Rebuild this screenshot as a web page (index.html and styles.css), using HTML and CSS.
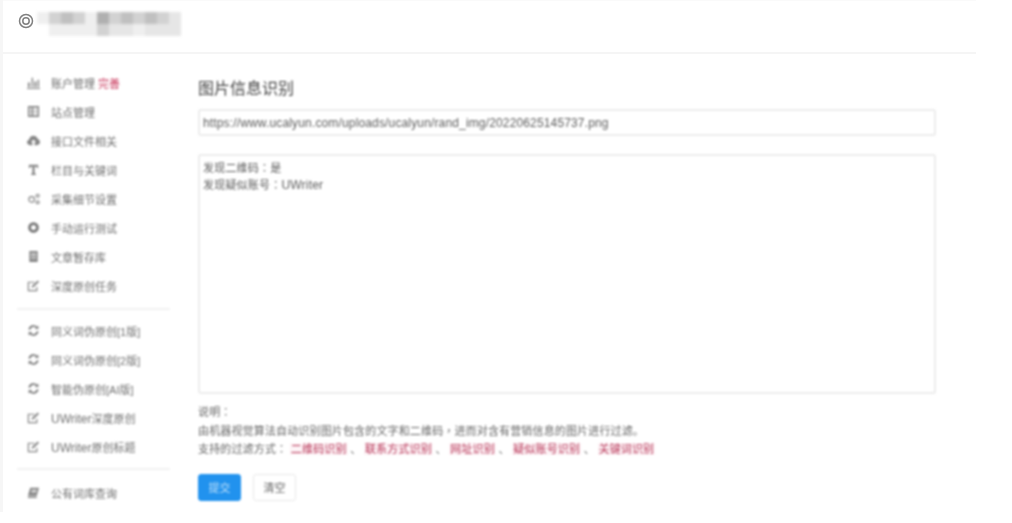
FILE: index.html
```html
<!DOCTYPE html>
<html lang="zh-CN">
<head>
<meta charset="utf-8">
<title>图片信息识别</title>
<link rel="stylesheet" href="styles.css">
</head>
<body>
<div class="shell">
  <header class="topbar">
    <svg class="logo" viewBox="0 0 16 16"><circle cx="8" cy="8" r="6.500"/><circle cx="8" cy="8" r="3.200"/></svg>
    <div class="mosaic" aria-hidden="true">
      <i class="m5"></i><i class="m3"></i><i class="m2"></i><i class="m3"></i><i class="m5"></i><i class="m1"></i><i class="m3"></i><i class="m2"></i><i class="m3"></i><i class="m2"></i><i class="m3"></i><i class="m4"></i>
      <i class="m0"></i><i class="m5"></i><i class="m5"></i><i class="m5"></i><i class="m5"></i><i class="m3"></i><i class="m4"></i><i class="m4"></i><i class="m5"></i><i class="m4"></i><i class="m4"></i><i class="m4"></i>
    </div>
  </header>
  <div class="body">
    <nav class="side">
      <ul class="menu">
        <li><svg viewBox="0 0 14 14"><path class="fill" d="M0 13h14v1H0zM1 7h2v5H1zM5 2h1.500v10H5zM8 6h2v6H8zM11.500 4H13v8h-1.500z"/></svg><span>账户管理 <b class="warn">完善</b></span></li>
        <li><svg viewBox="0 0 14 14"><path class="fill" d="M1 1h12v12H1zM2.500 3v2h2.500V3zM6.500 3v2h5V3zM2.500 6v2h2.500V6zM6.500 6v2h5V6zM2.500 9v2h2.500V9zM6.500 9v2h5V9z" fill-rule="evenodd"/></svg><span>站点管理</span></li>
        <li><svg viewBox="0 0 14 14"><path class="fill" d="M3.500 12C1.500 12 0 10.700 0 9c0-1.500 1-2.600 2.300-2.900C2.600 3.700 4.600 2 7 2c2.200 0 4 1.400 4.600 3.400C13 5.800 14 7.200 14 8.700 14 10.500 12.500 12 10.500 12H8.200V8.800h1.700L7 5.800l-2.900 3h1.700V12z"/></svg><span>接口文件相关</span></li>
        <li><svg viewBox="0 0 14 14"><path class="fill" d="M2 2h10v3.500h-1.200L10.300 4H8.200v7l1.300.5V13h-5v-1.500l1.300-.5V4H3.700l-.5 1.500H2z"/></svg><span>栏目与关键词</span></li>
        <li><svg viewBox="0 0 14 14"><circle class="line" cx="5" cy="8" r="3"/><circle class="line" cx="11.500" cy="4" r="1.600"/><circle class="line" cx="11.500" cy="11" r="1.600"/></svg><span>采集细节设置</span></li>
        <li><svg viewBox="0 0 14 14"><circle class="thick" cx="7" cy="7" r="4.200"/></svg><span>手动运行测试</span></li>
        <li><svg viewBox="0 0 14 14"><path class="fill" d="M2.500 1h9v12h-9zM4 3.500v1h6v-1zM4 6v1h6V6zM4 8.500v1h6v-1z" fill-rule="evenodd"/></svg><span>文章暂存库</span></li>
        <li><svg viewBox="0 0 14 14"><path class="line" d="M10.500 8.500V12.500H1.500V3.500H8"/><path class="fill" d="M5.500 7.300 11.500 1.500 13 3 7 8.800 5 9.300z"/></svg><span>深度原创任务</span></li>
      </ul>
      <ul class="menu ruled">
        <li><svg viewBox="0 0 14 14"><path class="thick2" d="M2.500 6A4.700 4.700 0 0 1 10.800 4M11.500 8A4.700 4.700 0 0 1 3.200 10"/><path class="fill" d="M12.300 1.500V5.500H8.300zM1.700 12.500V8.500H5.700z"/></svg><span>同义词伪原创[1版]</span></li>
        <li><svg viewBox="0 0 14 14"><path class="thick2" d="M2.500 6A4.700 4.700 0 0 1 10.800 4M11.500 8A4.700 4.700 0 0 1 3.200 10"/><path class="fill" d="M12.300 1.500V5.500H8.300zM1.700 12.500V8.500H5.700z"/></svg><span>同义词伪原创[2版]</span></li>
        <li><svg viewBox="0 0 14 14"><path class="thick2" d="M2.500 6A4.700 4.700 0 0 1 10.800 4M11.500 8A4.700 4.700 0 0 1 3.200 10"/><path class="fill" d="M12.300 1.500V5.500H8.300zM1.700 12.500V8.500H5.700z"/></svg><span>智能伪原创[AI版]</span></li>
        <li><svg viewBox="0 0 14 14"><path class="line" d="M10.500 8.500V12.500H1.500V3.500H8"/><path class="fill" d="M5.500 7.300 11.500 1.500 13 3 7 8.800 5 9.300z"/></svg><span><span class="latin">UWriter</span>深度原创</span></li>
        <li><svg viewBox="0 0 14 14"><path class="line" d="M10.500 8.500V12.500H1.500V3.500H8"/><path class="fill" d="M5.500 7.300 11.500 1.500 13 3 7 8.800 5 9.300z"/></svg><span><span class="latin">UWriter</span>原创标题</span></li>
      </ul>
      <ul class="menu ruled last">
        <li><svg viewBox="0 0 14 14"><path class="fill" d="M3.500 2H13L10.500 10.500H1zM5 4v1h5.500V4zM4.500 6v1H10V6zM1 11.300h9.500V13H1z" fill-rule="evenodd"/></svg><span>公有词库查询</span></li>
      </ul>
    </nav>
    <main class="main">
      <h1 class="title">图片信息识别</h1>
      <div class="field url">https://www.ucalyun.com/uploads/ucalyun/rand_img/20220625145737.png</div>
      <div class="field result">发现二维码<span class="colon" lang="zh-Hant">：</span>是<br>发现疑似账号<span class="colon" lang="zh-Hant">：</span><span class="latin">UWriter</span></div>
      <div class="notes">
        <p>说明<span class="colon" lang="zh-Hant">：</span></p>
        <p>由机器视觉算法自动识别图片包含的文字和二维码<span class="colon" lang="zh-Hant">，</span>进而对含有营销信息的图片进行过滤。</p>
        <p class="kinds">支持的过滤方式<span class="colon" lang="zh-Hant">：</span> <code>二维码识别</code> 、 <code>联系方式识别</code> 、 <code>网址识别</code> 、 <code>疑似账号识别</code> 、 <code>关键词识别</code></p>
      </div>
      <div class="actions">
        <button class="btn primary" type="button">提交</button>
        <button class="btn" type="button">清空</button>
      </div>
    </main>
  </div>
</div>
</body>
</html>
```
FILE: styles.css
```css
* { box-sizing: border-box; }
html, body { margin: 0; height: 523px; overflow: hidden; background: #fff; }
body { font-family: "Liberation Sans", "Noto Sans CJK SC", sans-serif; font-size: 11px; color: #777; }
.shell { width: 976px; height: 512px; border-left: 3px solid #f6f6f6; overflow: hidden; }
.topbar { height: 54px; border-top: 1px solid #fafafa; border-bottom: 2px solid #f5f5f5; display: flex; align-items: flex-start; padding: 12px 0 0 15px; }
.logo { width: 16px; height: 16px; flex: none; filter: blur(.5px); }
.logo circle { fill: none; stroke: #808080; stroke-width: 1.500; }
.mosaic { display: grid; grid-template-columns: repeat(12, 12px); grid-auto-rows: 12px; margin: -1px 0 0 3px; filter: blur(1.500px); }
.m0 { background: #fff; } .m1 { background: #b0b0b0; } .m2 { background: #c0c0c0; }
.m3 { background: #d2d2d2; } .m4 { background: #e6e6e6; } .m5 { background: #efefef; }
.body { display: flex; }
.side { width: 195px; flex: none; padding: 14px 0 0 14px; filter: blur(.8px); }
.menu { list-style: none; margin: 0; padding: 0 0 8px; width: 153px; }
.menu li { height: 29px; display: flex; align-items: center; gap: 11px; color: #707070; white-space: nowrap; }
.menu svg { width: 13px; height: 13px; flex: none; margin-left: 10px; }
.ruled { border-top: 2px solid #f1f1f1; padding: 6px 0 7px; }
.last { padding-top: 8px; }
.fill { fill: #858585; }
.line { fill: none; stroke: #858585; stroke-width: 1.300; }
.thick { fill: none; stroke: #757575; stroke-width: 3; }
.thick2 { fill: none; stroke: #757575; stroke-width: 1.800; }
.warn { font-weight: 400; color: #c9385c; }
.latin { font-size: 12px; line-height: 0; }
.main { width: 738px; flex: none; padding-top: 24px; filter: blur(.8px); }
.title { margin: 0 0 9px; font-size: 16px; line-height: 22px; font-weight: 400; color: #444; }
.field { border: 2px solid #ececec; border-radius: 3px; padding: 0 3px; color: #5c5c5c; }
.url { height: 27px; line-height: 24px; font-size: 12px; letter-spacing: .15px; margin-bottom: 18px; }
.result { height: 240px; padding-top: 4px; line-height: 17px; letter-spacing: .2px; }
.notes { margin-top: 9px; line-height: 18.500px; letter-spacing: .15px; color: #666; }
.notes p { margin: 0; }
.kinds { word-spacing: -.6px; }
.colon { font-family: "Noto Sans CJK TC", sans-serif; line-height: 0; }
code { font-family: inherit; color: #b8395a; background: #fdf3f6; letter-spacing: .15px; padding: 0 1px; }
.actions { display: flex; gap: 12px; margin-top: 15px; }
.btn { width: 43px; height: 27px; padding: 0; font: inherit; color: #666; background: #fff; border: 1px solid #e8e8e8; border-radius: 3px; }
.primary { background: #2192ee; border-color: #2192ee; color: #bfe0fa; }
```
